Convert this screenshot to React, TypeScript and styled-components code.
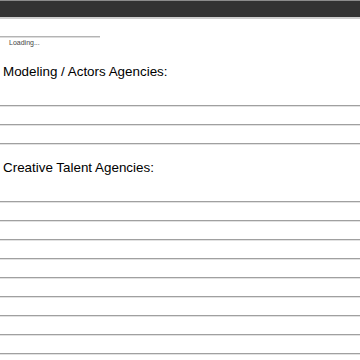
import React from "react";
import styled, { createGlobalStyle } from "styled-components";

const GlobalStyle = createGlobalStyle`
  html, body {
    margin: 0;
    padding: 0;
    background: #ffffff;
    font-family: "Liberation Sans", Arial, sans-serif;
  }
`;

const TopBar = styled.header`
  height: 16px;
  background: #333333;
  border-top: 1px solid #8c8c8c;
  border-bottom: 2px solid #cdcdcd;
`;

const Loader = styled.div`
  margin-top: 17px;
`;

const LoaderTrack = styled.div`
  width: 100px;
  height: 1px;
  border-top: 1px solid #b4b4b4;
  background: #dcdcdc;
`;

const LoaderText = styled.div`
  padding-left: 9px;
  font-size: 7px;
  line-height: 9px;
  color: #444444;
`;

const Section = styled.section<{ first?: boolean }>`
  margin-top: ${(p) => (p.first ? "17px" : "15px")};
`;

const Heading = styled.h2`
  margin: 0;
  padding-left: 3px;
  font-size: 13.4px;
  line-height: 15px;
  font-weight: normal;
  color: #000000;
`;

const RuleList = styled.div`
  margin-top: 26px;
  display: flex;
  flex-direction: column;
  gap: 17px;
`;

const Rule = styled.div`
  height: 0;
  border-top: 1px solid #a0a0a0;
  border-bottom: 1px solid #e2e2e2;
`;

const sections = [
  { title: "Modeling / Actors Agencies:", rows: 3 },
  { title: "Creative Talent Agencies:", rows: 9 },
];

export default function App() {
  return (
    <>
      <GlobalStyle />
      <TopBar />
      <Loader>
        <LoaderTrack />
        <LoaderText>Loading...</LoaderText>
      </Loader>
      {sections.map((s, i) => (
        <Section key={s.title} first={i === 0}>
          <Heading>{s.title}</Heading>
          <RuleList>
            {Array.from({ length: s.rows }).map((_, j) => (
              <Rule key={j} />
            ))}
          </RuleList>
        </Section>
      ))}
    </>
  );
}
